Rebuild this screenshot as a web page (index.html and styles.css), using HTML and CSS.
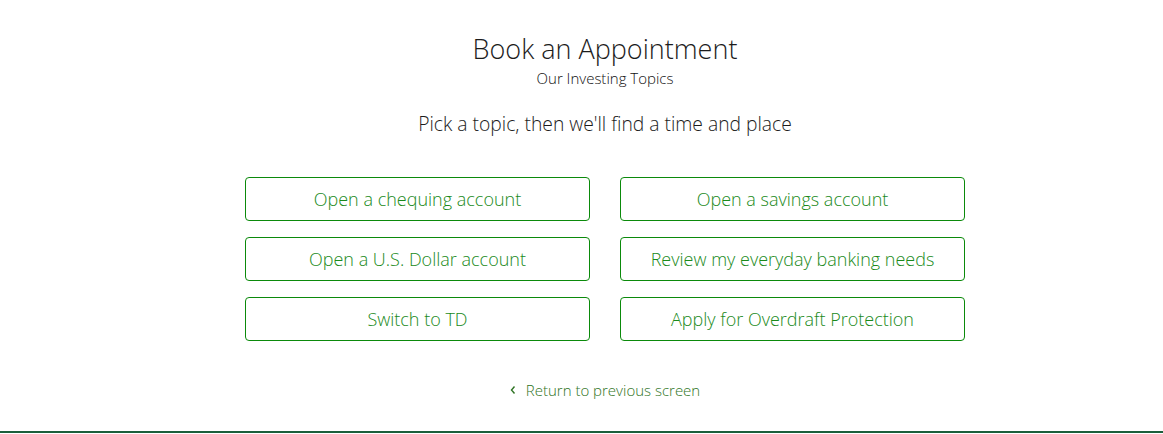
FILE: index.html
```html
<!DOCTYPE html>
<html lang="en">
<head>
<meta charset="utf-8">
<title>Book an Appointment</title>
<link rel="stylesheet" href="styles.css">
</head>
<body>
<main class="page">
  <header class="intro">
    <h1 class="title">Book an Appointment</h1>
    <p class="subtitle">Our Investing Topics</p>
    <p class="lead">Pick a topic, then we'll find a time and place</p>
  </header>
  <div class="topics">
    <button class="topic">Open a chequing account</button>
    <button class="topic">Open a savings account</button>
    <button class="topic">Open a U.S. Dollar account</button>
    <button class="topic">Review my everyday banking needs</button>
    <button class="topic">Switch to TD</button>
    <button class="topic">Apply for Overdraft Protection</button>
  </div>
  <a class="back" href="#">
    <svg class="chev" width="6" height="10" viewBox="0 0 6 10" aria-hidden="true"><path d="M4.5 1.5 L1.5 5 L4.5 8.5" fill="none" stroke="currentColor" stroke-width="1.4"/></svg>
    <span>Return to previous screen</span>
  </a>
</main>
<div class="footer-line"></div>
</body>
</html>
```
FILE: styles.css
```css
html, body {
  margin: 0;
  padding: 0;
  background: #fff;
}
body {
  font-family: "Open Sans", "Noto Sans", sans-serif;
  font-weight: 300;
  color: #1c1c1c;
  height: 434px;
  display: flex;
  flex-direction: column;
}
.page {
  flex: 1;
  display: flex;
  flex-direction: column;
  align-items: center;
  padding-left: 47px;
  padding-top: 30px;
}
.intro {
  text-align: center;
}
.title {
  margin: 0;
  font-size: 27px;
  font-weight: 300;
  line-height: 38px;
  color: #1c1c1c;
}
.subtitle {
  margin: 0;
  font-size: 15px;
  font-weight: 300;
  line-height: 20px;
  color: #111;
}
.lead {
  margin: 23px 0 0;
  font-size: 19.3px;
  font-weight: 300;
  line-height: 26px;
  color: #1c1c1c;
}
.topics {
  margin-top: 40px;
  display: grid;
  grid-template-columns: 345px 345px;
  column-gap: 30px;
  row-gap: 16px;
}
.topic {
  height: 44px;
  box-sizing: border-box;
  border: 1px solid #0b8a0b;
  border-radius: 4px;
  background: #fff;
  font-family: "Open Sans", "Noto Sans", sans-serif;
  font-weight: 300;
  font-size: 18px;
  color: #1a8a1a;
  padding: 0 8px;
  cursor: pointer;
}
.back {
  margin-top: 39px;
  display: flex;
  align-items: center;
  gap: 10px;
  font-size: 15px;
  font-weight: 300;
  color: #2f7424;
  text-decoration: none;
}
.chev {
  display: block;
}
.footer-line {
  height: 2px;
  background: #1b5e3b;
  margin-bottom: 1px;
}
```
